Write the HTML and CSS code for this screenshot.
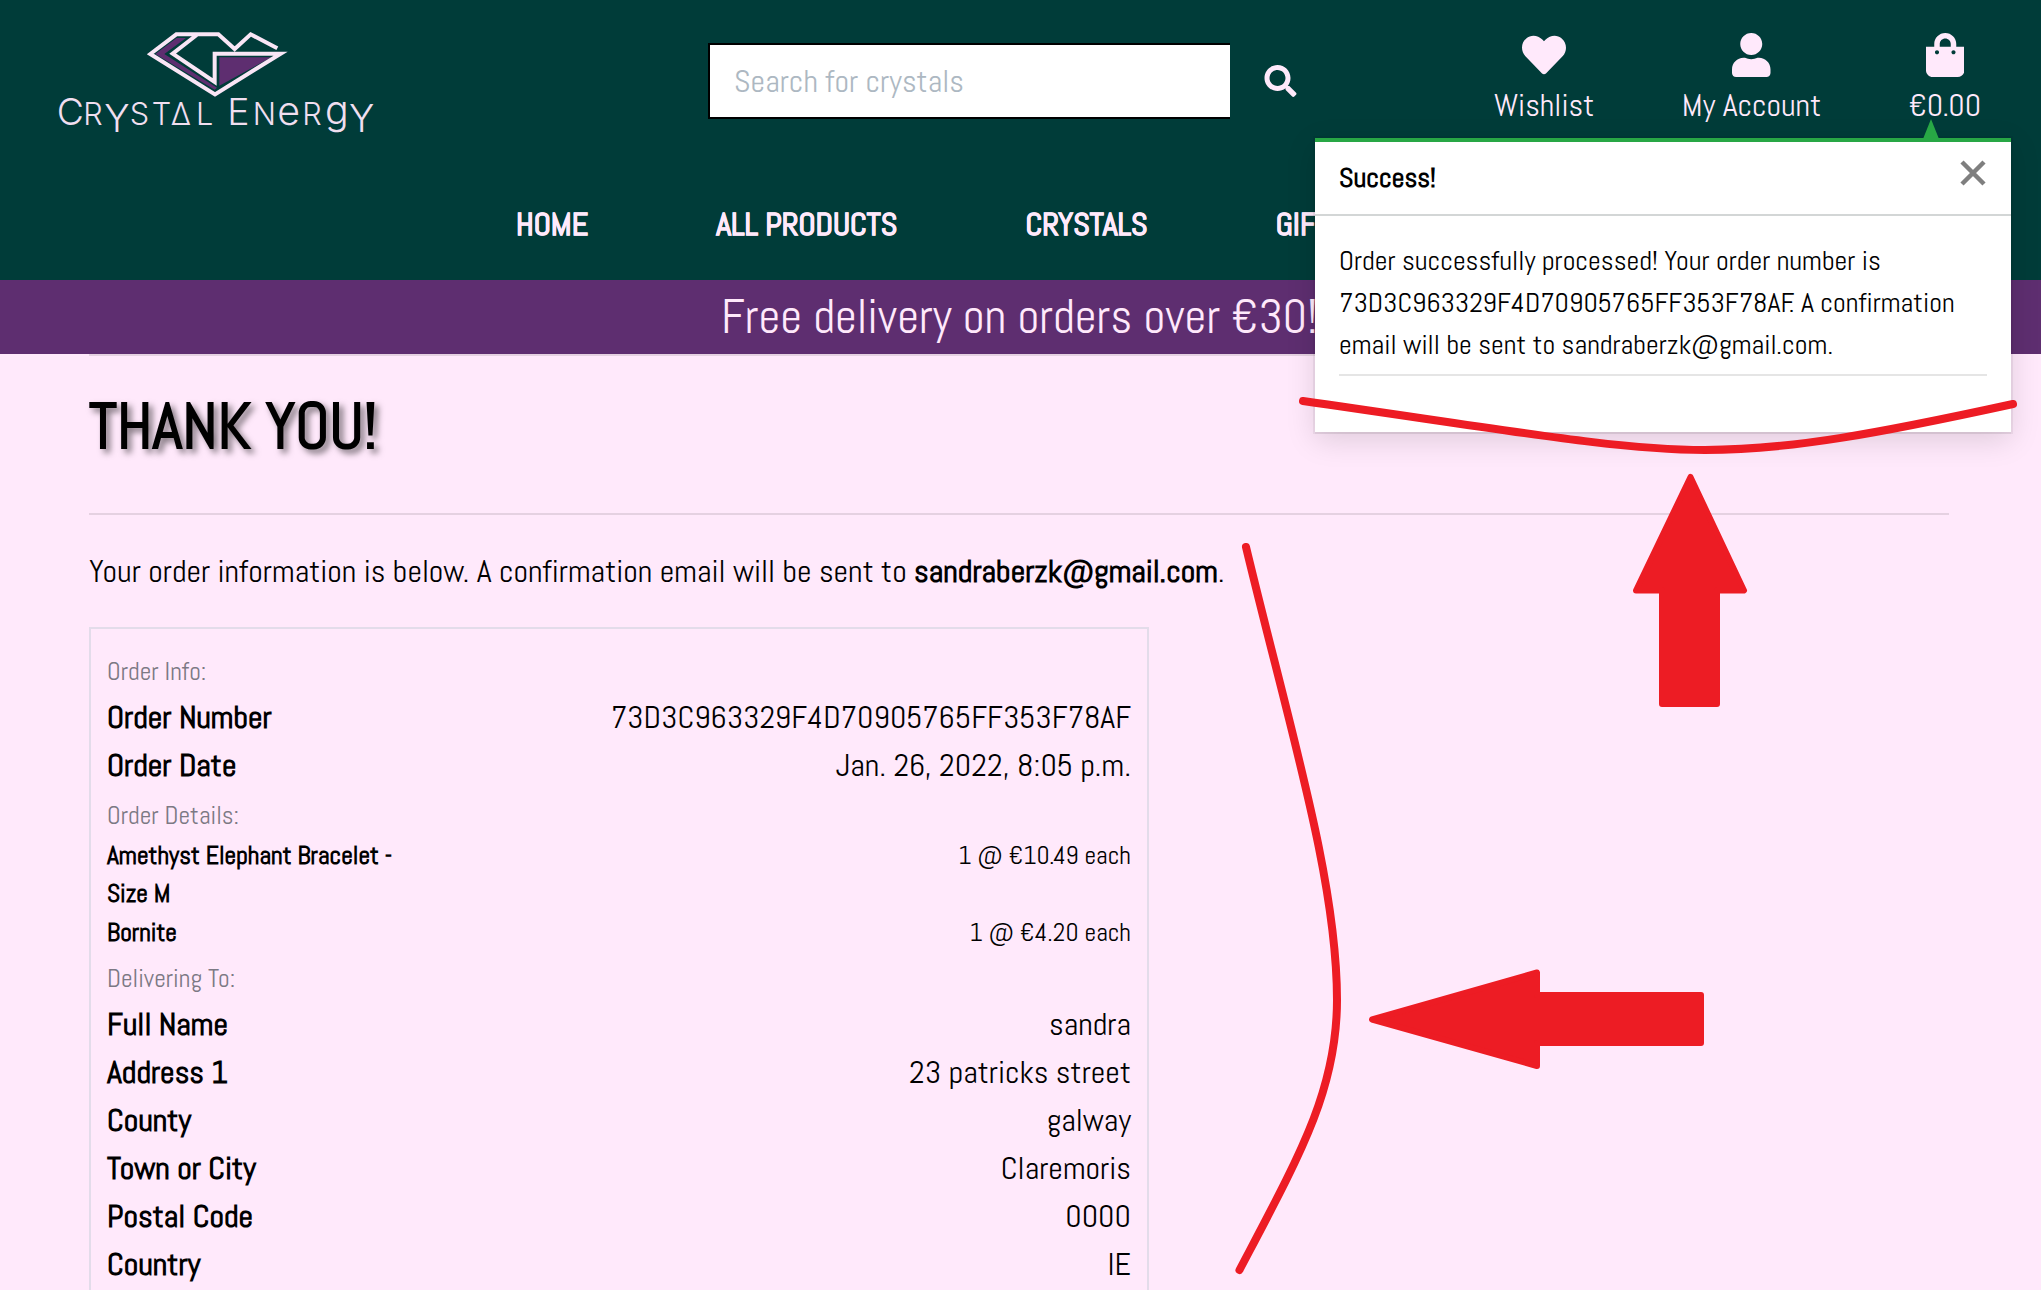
FILE: index.html
```html
<!DOCTYPE html>
<html lang="en">
<head>
<meta charset="utf-8">
<title>Crystal Energy</title>
<link rel="stylesheet" href="styles.css">
</head>
<body>
<header class="header">
  <div class="topbar">
    <a class="logo" aria-label="Crystal Energy">
      <svg width="350" height="130" viewBox="0 0 1050 390">
        <path class="logo-fill" d="M410 54H438L373 102L531 203L524 209L346 102Z"/>
        <path class="logo-fill" d="M538 112H694L538 197Z"/>
        <path class="logo-line" d="M712 85L632 43L584 87L535 43H409L331 102L525 223L722 101H524V186L398 101L470 45"/>
        <text class="logo-text" y="315"><tspan x="50">C</tspan><tspan class="logo-small" x="130">R</tspan><tspan class="logo-deep" x="193" y="335">Y</tspan><tspan class="logo-small" x="269 335 392 468" y="315">ST&#916;L</tspan></text>
        <text class="logo-text" y="315"><tspan x="562">E</tspan><tspan class="logo-small" x="638">N</tspan><tspan class="logo-round" x="712">e</tspan><tspan class="logo-small" x="787">R</tspan><tspan class="logo-round" x="855" y="312">g</tspan><tspan class="logo-deep" x="927" y="335">Y</tspan></text>
      </svg>
    </a>
    <form class="search">
      <input class="search-input" type="text" placeholder="Search for crystals">
      <svg class="search-icon" viewBox="0 0 512 512"><path d="M505 442.7L405.3 343c-4.5-4.5-10.6-7-17-7H372c27.600-35.300 44-79.700 44-128C416 93.100 322.900 0 208 0S0 93.100 0 208s93.100 208 208 208c48.300 0 92.700-16.400 128-44v16.300c0 6.400 2.500 12.500 7 17l99.700 99.700c9.400 9.400 24.600 9.400 33.900 0l28.300-28.300c9.400-9.400 9.400-24.600.1-34zM208 336c-70.700 0-128-57.200-128-128 0-70.700 57.200-128 128-128 70.700 0 128 57.200 128 128 0 70.700-57.200 128-128 128z"/></svg>
    </form>
    <div class="account">
      <a class="tool"><svg class="tool-icon" viewBox="0 0 512 512"><path d="M462.300 62.600C407.500 15.900 326 24.300 275.700 76.200L256 96.500l-19.700-20.300C186.100 24.300 104.500 15.900 49.700 62.600c-62.800 53.600-66.100 149.800-9.900 207.900l193.500 199.800c12.500 12.900 32.800 12.900 45.300 0l193.500-199.800c56.300-58.100 53-154.300-9.800-207.900z"/></svg><span>Wishlist</span></a>
      <a class="tool"><svg class="tool-icon" viewBox="0 0 448 512"><path d="M224 256c70.700 0 128-57.300 128-128S294.700 0 224 0 96 57.300 96 128s57.300 128 128 128zm89.600 32h-16.700c-22.200 10.200-46.900 16-72.900 16s-50.600-5.800-72.900-16h-16.700C60.200 288 0 348.200 0 422.400V464c0 26.500 21.500 48 48 48h352c26.500 0 48-21.500 48-48v-41.600c0-74.200-60.200-134.400-134.400-134.400z"/></svg><span>My Account</span></a>
      <a class="tool"><svg class="tool-icon" viewBox="0 0 448 512"><path d="M352 160v-32C352 57.420 294.579 0 224 0 153.420 0 96 57.420 96 128v32H0v272c0 44.183 35.817 80 80 80h288c44.183 0 80-35.817 80-80V160h-96zm-192-32c0-35.290 28.710-64 64-64s64 28.710 64 64v32H160v-32zm160 120c-13.255 0-24-10.745-24-24s10.745-24 24-24 24 10.745 24 24-10.745 24-24 24zm-192 0c-13.255 0-24-10.745-24-24s10.745-24 24-24 24 10.745 24 24-10.745 24-24 24z"/></svg><span>€0.00</span></a>
    </div>
  </div>
  <nav class="nav">
    <a>HOME</a><a>ALL PRODUCTS</a><a>CRYSTALS</a><a>GIFTS</a>
  </nav>
</header>
<div class="banner">Free delivery on orders over €30!</div>
<main class="content">
  <hr class="rule">
  <h2 class="title">THANK YOU!</h2>
  <hr class="rule rule-title">
  <p class="intro">Your order information is below. A confirmation email will be sent to <strong>sandraberzk@gmail.com</strong>.</p>
  <section class="order">
    <div class="row"><small class="muted">Order Info:</small></div>
    <div class="row"><strong>Order Number</strong><span>73D3C963329F4D70905765FF353F78AF</span></div>
    <div class="row"><strong>Order Date</strong><span>Jan. 26, 2022, 8:05 p.m.</span></div>
    <div class="row"><small class="muted">Order Details:</small></div>
    <div class="row item"><strong>Amethyst Elephant Bracelet -<br>Size M</strong><span>1 @ €10.49 each</span></div>
    <div class="row item"><strong>Bornite</strong><span>1 @ €4.20 each</span></div>
    <div class="row"><small class="muted">Delivering To:</small></div>
    <div class="row"><strong>Full Name</strong><span>sandra</span></div>
    <div class="row"><strong>Address 1</strong><span>23 patricks street</span></div>
    <div class="row"><strong>County</strong><span>galway</span></div>
    <div class="row"><strong>Town or City</strong><span>Claremoris</span></div>
    <div class="row"><strong>Postal Code</strong><span>0000</span></div>
    <div class="row"><strong>Country</strong><span>IE</span></div>
  </section>
</main>
<aside class="toast">
  <div class="toast-arrow"></div>
  <div class="toast-head"><strong>Success!</strong>
    <svg class="close" width="26" height="26" viewBox="0 0 26 26"><path d="M2 2L24 24M24 2L2 24"/></svg>
  </div>
  <div class="toast-body">
    <p class="toast-text">Order successfully processed! Your order number is 73D3C963329F4D70905765FF353F78AF. A confirmation email will be sent to sandraberzk@gmail.com.</p>
    <hr class="rule">
  </div>
</aside>
<svg class="marks" width="2041" height="1290" viewBox="0 0 2041 1290">
  <path class="stroke" d="M1303 401C1520 432 1620 450 1705 450S1880 433 2013 404"/>
  <path class="stroke" d="M1246 547C1290 730 1337 880 1337 1000C1337 1090 1300 1155 1239.500 1270"/>
  <path class="arrow" d="M1690.500 477L1744 590.500H1717V704H1662V590.500H1636Z"/>
  <path class="arrow" d="M1372 1019.500L1537 972.500V995H1701V1043H1537V1066Z"/>
</svg>
</body>
</html>
```
FILE: styles.css
```css
* { box-sizing: border-box; }
body {
  margin: 0;
  height: 1290px;
  overflow: hidden;
  position: relative;
  background: #ffe9fb;
  color: #000;
  font: 400 32px/48px Abel, "Roboto Condensed", sans-serif;
}
.header { height: 280px; background: #003c39; color: #ffe9fb; }
.topbar {
  display: grid;
  grid-template-columns: 668px 774px 1fr;
  padding: 20px 40px 0;
  height: 185px;
}
.logo svg { display: block; }
.logo-line { fill: none; stroke: #f9e6f6; stroke-width: 12; }
.logo-fill { fill: #5e2e70; }
.logo-text { fill: #f0dff0; font: 300 112px Inter, sans-serif; }
.logo-small { font-size: 92px; }
.logo-deep { font-size: 114px; }
.logo-round { font-size: 118px; }
.search { display: flex; align-items: center; height: 76px; margin-top: 23px; }
.search-input {
  width: 522px;
  height: 76px;
  padding: 0 24px;
  border: 2px solid #000;
  border-right: 0;
  border-radius: 0;
  background: #fff;
  font: inherit;
}
.search-input::placeholder { color: #adb8c2; opacity: 1; }
.search-icon { width: 33px; height: 32px; margin-left: 34px; fill: currentColor; }
.account { display: flex; gap: 87.5px; margin-left: 12px; }
.tool { display: flex; flex-direction: column; align-items: center; white-space: nowrap; }
.tool-icon { height: 44px; margin-top: 13px; margin-bottom: 4px; fill: currentColor; }
.nav { display: flex; gap: 128px; margin-left: 516px; padding-top: 15px; font-weight: 700; white-space: nowrap; -webkit-text-stroke: .4px currentColor; }
.banner { height: 74px; padding-left: 721px; background: #5e2e70; color: #ffe9fb; font-size: 48px; line-height: 74px; }
.content { width: 1860px; margin-left: 89px; }
.rule { height: 2px; margin: 0; border: 0; background: rgba(0, 0, 0, .1); }
.title { margin: 32px 0 48px; font-size: 64px; line-height: 77px; text-shadow: 4px 4px 6px rgba(0, 0, 0, .5); }
.intro { margin: 32px 0; }
.order { width: 1060px; padding: 16px 16px 48px; border: 2px solid #e3dcea; }
.row { display: flex; justify-content: space-between; min-height: 48px; }
.row small { font-size: 25.6px; line-height: 54px; height: 48px; }
.muted { color: #7c7984; }
.item { min-height: 0; font-size: 25.6px; line-height: 38.4px; }
.toast {
  position: absolute;
  top: 138px;
  left: 1315px;
  width: 696px;
  height: 294px;
  background: #fff;
  border-top: 4px solid #28a745;
  box-shadow: 0 2px 0 0 rgba(0, 0, 0, .04), 0 0 0 2px rgba(0, 0, 0, .05), 0 8px 28px rgba(0, 0, 0, .13);
  font-size: 28px;
  line-height: 42px;
}
.toast-arrow {
  position: absolute;
  top: -23px;
  right: 72px;
  border: 8px solid transparent;
  border-top: 0;
  border-bottom: 20px solid #28a745;
}
.toast-head {
  display: flex;
  justify-content: space-between;
  height: 74px;
  padding: 15px 25px 0 24px;
  border-bottom: 2px solid #d3d6d6;
}
.close { margin-top: 3px; fill: none; stroke: #7f7f7f; stroke-width: 4.5; }
.toast-body { padding: 24px 24px 0; }
.toast-text { margin: 0 0 8px; }
.marks { position: absolute; left: 0; top: 0; }
.stroke { fill: none; stroke: #ed1c24; stroke-width: 8; stroke-linecap: round; }
.arrow { fill: #ed1c24; stroke: #ed1c24; stroke-width: 6; stroke-linejoin: round; }
```
